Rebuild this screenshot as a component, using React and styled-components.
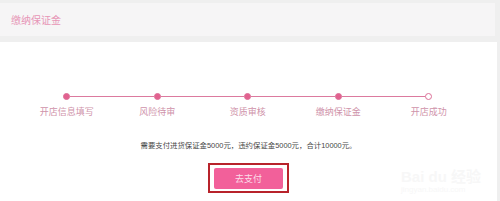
import React from "react";
import styled, { createGlobalStyle } from "styled-components";

const steps = [
  { label: "开店信息填写", done: true },
  { label: "风险待审", done: true },
  { label: "资质审核", done: true },
  { label: "缴纳保证金", done: true },
  { label: "开店成功", done: false },
];

const GlobalStyle = createGlobalStyle`
  html, body {
    margin: 0;
    padding: 0;
    background: #efefef;
    font-family: "Liberation Sans", "Noto Sans CJK SC", sans-serif;
  }
`;

const Page = styled.div`
  width: 500px;
  height: 201px;
  overflow: hidden;
  padding-top: 3px;
  box-sizing: border-box;
  display: flex;
  flex-direction: column;
  gap: 6px;
`;

const Header = styled.header`
  width: 495px;
  height: 33px;
  background: #f6f5f6;
  display: flex;
  align-items: center;
  padding-left: 11px;
  box-sizing: border-box;

  h1 {
    margin: 0;
    font-size: 10px;
    font-weight: 400;
    color: #e796b6;
  }
`;

const Panel = styled.section`
  position: relative;
  width: 497px;
  flex: 1;
  background: #ffffff;
  display: flex;
  flex-direction: column;
  align-items: center;
  padding-top: 51px;
  box-sizing: border-box;
`;

const Steps = styled.ol`
  list-style: none;
  margin: 0;
  padding: 0;
  display: grid;
  grid-template-columns: repeat(5, 90.5px);
  align-self: flex-start;
  margin-left: 21.5px;
`;

const Step = styled.li`
  display: flex;
  flex-direction: column;
  align-items: center;
`;

const Track = styled.div`
  width: 100%;
  height: 7px;
  display: flex;
  align-items: center;

  &::before,
  &::after {
    content: "";
    flex: 1;
    height: 1px;
    background: #dc7a9f;
  }
  &::before {
    visibility: ${(p) => (p.$first ? "hidden" : "visible")};
  }
  &::after {
    visibility: ${(p) => (p.$last ? "hidden" : "visible")};
  }
`;

const Dot = styled.span`
  width: 7px;
  height: 7px;
  border-radius: 50%;
  box-sizing: border-box;
  background: ${(p) => (p.$done ? "#e2618f" : "#ffffff")};
  border: 1px solid #dc6f97;
`;

const Label = styled.span`
  margin-top: 6px;
  font-size: 9px;
  line-height: 12px;
  color: #cf93aa;
  white-space: nowrap;
`;

const Note = styled.p`
  margin: 23px 0 0;
  font-size: 7.4px;
  line-height: 10px;
  color: #484848;
  white-space: nowrap;
`;

const Highlight = styled.div`
  margin-top: 12px;
  border: 2px solid #b8232b;
  padding: 3px 4px 2px;
  display: flex;
`;

const PayButton = styled.button`
  width: 69px;
  height: 21px;
  border: none;
  border-radius: 2px;
  background: #f2609a;
  color: #fbdde9;
  font-family: "Liberation Sans", "Noto Sans CJK SC", sans-serif;
  font-size: 9px;
  padding: 0;
  cursor: pointer;
`;

const Watermark = styled.div`
  position: absolute;
  right: 16px;
  bottom: 6px;
  color: #f7f7f7;
  font-size: 15px;
  font-weight: 700;
  line-height: 16px;

  small {
    display: block;
    font-size: 8px;
    font-weight: 400;
    line-height: 10px;
  }
`;

export default function App() {
  return (
    <>
      <GlobalStyle />
      <Page>
        <Header>
          <h1>缴纳保证金</h1>
        </Header>
        <Panel>
          <Steps>
            {steps.map((s, i) => (
              <Step key={s.label}>
                <Track $first={i === 0} $last={i === steps.length - 1}>
                  <Dot $done={s.done} />
                </Track>
                <Label>{s.label}</Label>
              </Step>
            ))}
          </Steps>
          <Note>需要支付进货保证金5000元，违约保证金5000元，合计10000元。</Note>
          <Highlight>
            <PayButton>去支付</PayButton>
          </Highlight>
          <Watermark>
            Bai du 经验
            <small>jingyan.baidu.com</small>
          </Watermark>
        </Panel>
      </Page>
    </>
  );
}
